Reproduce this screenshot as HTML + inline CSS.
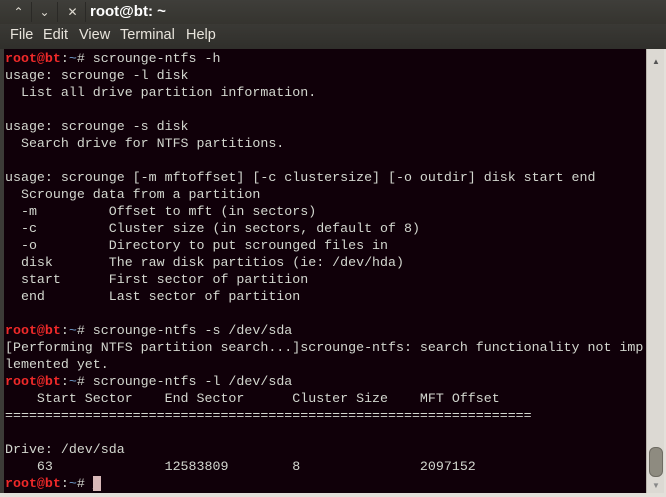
<!DOCTYPE html>
<html><head><style>
*{margin:0;padding:0;box-sizing:border-box}
body{width:666px;height:497px;overflow:hidden;background:#3c3b37;font-family:"Liberation Sans",sans-serif;position:relative}
#title{position:absolute;left:0;top:0;width:666px;height:24px;background:linear-gradient(#3f3e3a,#35342f);}
.btn{position:absolute;top:2px;width:26px;height:20px;color:#dfdbd2;font-size:12px;text-align:center;line-height:20px;border-right:1px solid #2a2926}
#ttext{position:absolute;left:90px;top:3px;color:#fff;font-weight:bold;font-size:15px}
#menu{position:absolute;left:0;top:24px;width:666px;height:25px;background:linear-gradient(#3a3935,#302f2b);color:#e8e4dc;font-size:14.5px}
#menu span{position:absolute;top:3px}
#term{position:absolute;left:4px;top:49px;width:642px;height:444px;background:#100009;}
pre{font-family:"Liberation Mono",monospace;font-size:13.3px;line-height:17px;color:#d3d7cf;padding:1px 0 0 1px;white-space:pre}
.p{color:#ef2929;font-weight:bold}.b{color:#729fcf}
#sb{position:absolute;left:646px;top:49px;width:18px;height:444px;background:#dcd9d3;border-left:1px solid #b8b4ac}
#thumb{position:absolute;left:2px;top:398px;width:14px;height:30px;background:#8e8b80;border-radius:6px;border:1px solid #6e6b62}
#frame{position:absolute;left:0;top:493px;width:666px;height:4px;background:#e3e0da}
#rf{position:absolute;left:664px;top:49px;width:2px;height:448px;background:#e3e0da}
.cur{background:#d8b8b8;color:#d8b8b8}
</style></head><body>
<div id="title">
<div class="btn" style="left:6px">&#8963;</div>
<div class="btn" style="left:32px">&#8964;</div>
<div class="btn" style="left:60px">&#10005;</div>
<div id="ttext">root@bt: ~</div>
</div>
<div id="menu"><span style="left:10px">File</span><span style="left:43px">Edit</span><span style="left:79px">View</span><span style="left:120px">Terminal</span><span style="left:186px">Help</span></div>
<div id="term"><pre><span class="p">root@bt</span>:<span class="b">~</span># scrounge-ntfs -h
usage: scrounge -l disk
  List all drive partition information.

usage: scrounge -s disk
  Search drive for NTFS partitions.

usage: scrounge [-m mftoffset] [-c clustersize] [-o outdir] disk start end
  Scrounge data from a partition
  -m         Offset to mft (in sectors)
  -c         Cluster size (in sectors, default of 8)
  -o         Directory to put scrounged files in
  disk       The raw disk partitios (ie: /dev/hda)
  start      First sector of partition
  end        Last sector of partition

<span class="p">root@bt</span>:<span class="b">~</span># scrounge-ntfs -s /dev/sda
[Performing NTFS partition search...]scrounge-ntfs: search functionality not imp
lemented yet.
<span class="p">root@bt</span>:<span class="b">~</span># scrounge-ntfs -l /dev/sda
    Start Sector    End Sector      Cluster Size    MFT Offset
==================================================================

Drive: /dev/sda
    63              12583809        8               2097152
<span class="p">root@bt</span>:<span class="b">~</span># <span class="cur">_</span></pre></div>
<div id="sb"><div style="position:absolute;left:5px;top:8px;font-size:8px;color:#555">&#9650;</div><div id="thumb"></div><div style="position:absolute;left:5px;top:432px;font-size:8px;color:#888">&#9660;</div></div>
<div id="rf"></div>
<div id="frame"></div>
</body></html>
